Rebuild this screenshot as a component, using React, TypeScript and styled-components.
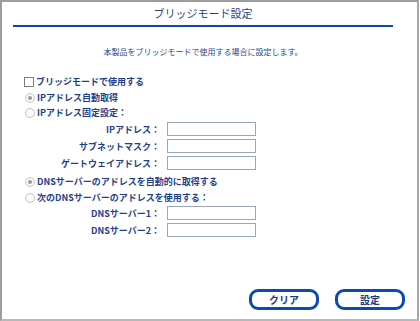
import styled, { createGlobalStyle } from "styled-components"

const GlobalStyle = createGlobalStyle`
  html, body {
    margin: 0;
    padding: 0;
    background: #ffffff;
  }
  body {
    font-family: "Noto Sans CJK JP", "Liberation Sans", sans-serif;
  }
`

const ipFields = ["IPアドレス：", "サブネットマスク：", "ゲートウェイアドレス："]
const dnsFields = ["DNSサーバー1：", "DNSサーバー2："]

const App = () => (
  <>
    <GlobalStyle />
    <Frame>
      <Header>
        <Title>ブリッジモード設定</Title>
        <Rule />
      </Header>
      <Description>本製品をブリッジモードで使用する場合に設定します。</Description>
      <Options>
        <OptionRow $h={16}>
          <CheckBox />
          <OptionLabel>ブリッジモードで使用する</OptionLabel>
        </OptionRow>
        <OptionRow $h={15}>
          <Radio $checked />
          <OptionLabel>IPアドレス自動取得</OptionLabel>
        </OptionRow>
        <OptionRow $h={16}>
          <Radio />
          <OptionLabel>IPアドレス固定設定：</OptionLabel>
        </OptionRow>
        <FieldGrid>
          {ipFields.map((f) => (
            <FieldRow key={f}>
              <FieldLabel>{f}</FieldLabel>
              <TextBox />
            </FieldRow>
          ))}
        </FieldGrid>
        <OptionRow $h={16} $top={2}>
          <Radio $checked />
          <OptionLabel>DNSサーバーのアドレスを自動的に取得する</OptionLabel>
        </OptionRow>
        <OptionRow $h={15}>
          <Radio />
          <OptionLabel>次のDNSサーバーのアドレスを使用する：</OptionLabel>
        </OptionRow>
        <FieldGrid>
          {dnsFields.map((f) => (
            <FieldRow key={f}>
              <FieldLabel>{f}</FieldLabel>
              <TextBox />
            </FieldRow>
          ))}
        </FieldGrid>
      </Options>
      <Footer>
        <PillButton>クリア</PillButton>
        <PillButton>設定</PillButton>
      </Footer>
    </Frame>
  </>
)

const Frame = styled.div`
  width: 419px;
  height: 321px;
  box-sizing: border-box;
  border-top: 2px solid #9c9c9c;
  border-left: 2px solid #9c9c9c;
  border-right: 2px solid #a8a8a8;
  border-bottom: 2px solid #b8b8b8;
  display: flex;
  flex-direction: column;
  background: #ffffff;
  color: #1e3f8a;
`

const Header = styled.div`
  display: flex;
  flex-direction: column;
  align-items: center;
  width: 380px;
  margin-left: 11px;
`

const Title = styled.h1`
  margin: 0;
  height: 23px;
  line-height: 23px;
  font-size: 11px;
  font-weight: 400;
  color: #2a4382;
`

const Rule = styled.div`
  width: 100%;
  height: 2px;
  background: #0f48b4;
`

const Description = styled.p`
  margin: 19px 0 0 11px;
  width: 380px;
  text-align: center;
  font-size: 8px;
  line-height: 12px;
  color: #2a4a8e;
`

const Options = styled.div`
  display: flex;
  flex-direction: column;
  margin-top: 16px;
  padding-left: 22px;
`

const OptionRow = styled.div<{ $h: number; $top?: number }>`
  display: flex;
  align-items: center;
  gap: 2px;
  height: ${(p) => p.$h}px;
  margin-top: ${(p) => p.$top ?? 0}px;
`

const CheckBox = styled.span`
  width: 8px;
  height: 8px;
  border: 1px solid #7c7c7c;
  background: #ffffff;
  box-sizing: content-box;
  flex: none;
`

const Radio = styled.span<{ $checked?: boolean }>`
  position: relative;
  width: 8px;
  height: 8px;
  margin-left: 1px;
  border: 1px solid #c4c4c4;
  border-radius: 50%;
  background: #fbfbfb;
  flex: none;

  &::after {
    content: "";
    display: ${(p) => (p.$checked ? "block" : "none")};
    position: absolute;
    left: 2px;
    top: 2px;
    width: 4px;
    height: 4px;
    border-radius: 50%;
    background: #9a9a9a;
  }
`

const OptionLabel = styled.span`
  font-size: 9px;
  font-weight: 700;
  line-height: 12px;
  white-space: nowrap;
`

const FieldGrid = styled.div`
  display: grid;
  grid-template-columns: 136px 89px;
  column-gap: 7px;
`

const FieldRow = styled.div`
  display: contents;
`

const FieldLabel = styled.span`
  height: 17px;
  line-height: 17px;
  text-align: right;
  font-size: 9px;
  font-weight: 700;
  white-space: nowrap;
`

const TextBox = styled.input.attrs({ type: "text" })`
  box-sizing: border-box;
  width: 89px;
  height: 14px;
  margin: 1px 0 2px;
  padding: 0 2px;
  border: 1px solid #97a8bc;
  background: #ffffff;
  outline: none;
  font-size: 9px;
`

const Footer = styled.div`
  margin-top: auto;
  display: flex;
  justify-content: flex-end;
  gap: 16px;
  padding: 0 12px 9px 0;
`

const PillButton = styled.button`
  box-sizing: border-box;
  width: 70px;
  height: 21px;
  padding: 0;
  border: 3px solid #0d4ab0;
  border-radius: 9px;
  background: #ffffff;
  color: #1e3a78;
  font-family: "Noto Sans CJK JP", "Liberation Sans", sans-serif;
  font-size: 10px;
  font-weight: 700;
  line-height: 14px;
`

export default App
